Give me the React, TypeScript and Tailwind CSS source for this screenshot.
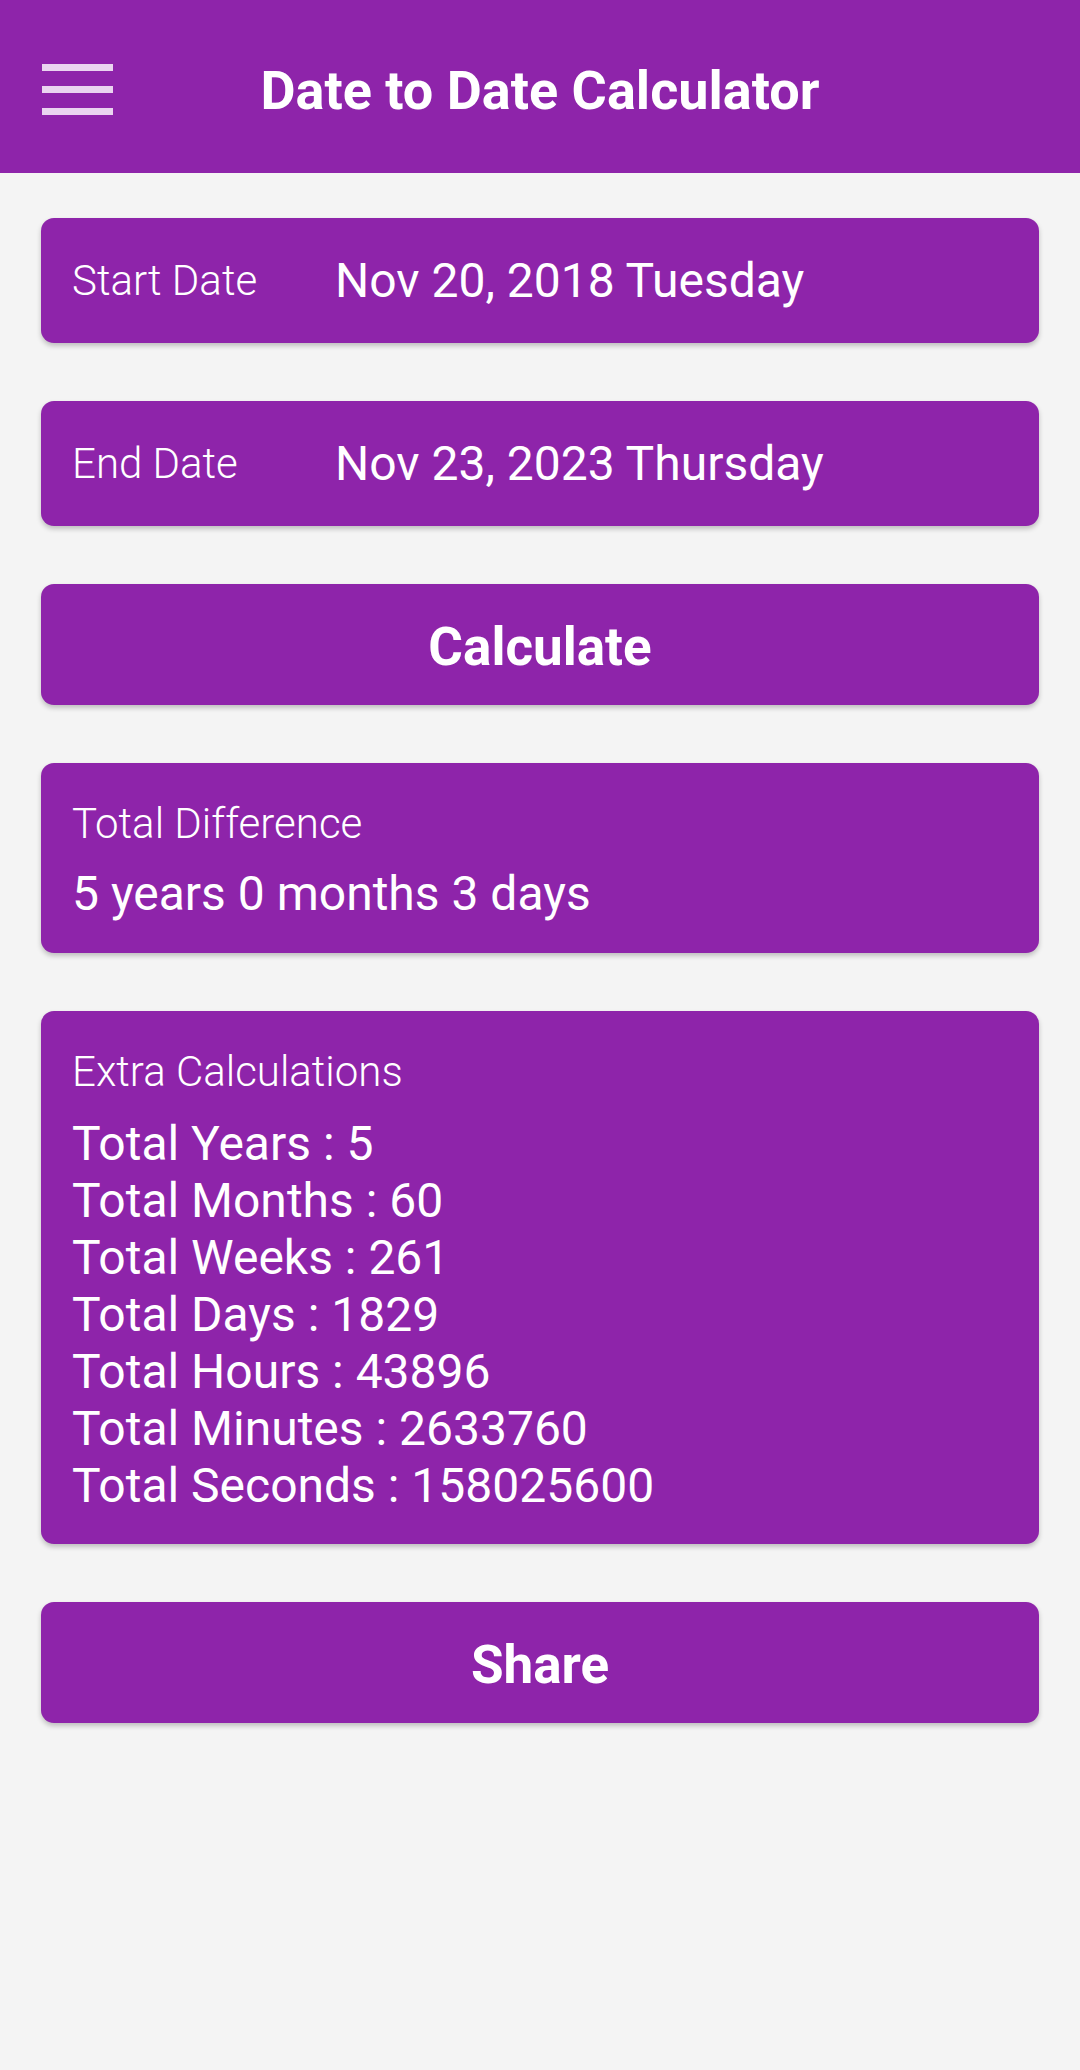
import React from 'react';

const purple = 'bg-[#8e24aa]';
const cardShadow = 'shadow-[0_3px_5px_rgba(0,0,0,0.22)]';

const extraRows = [
  ['Total Years', '5'],
  ['Total Months', '60'],
  ['Total Weeks', '261'],
  ['Total Days', '1829'],
  ['Total Hours', '43896'],
  ['Total Minutes', '2633760'],
  ['Total Seconds', '158025600'],
];

const DateRow = ({ label, value }: { label: string; value: string }) => (
  <div className={`${purple} ${cardShadow} h-[125px] rounded-[13px] flex items-center pl-[31px]`}>
    <span className="w-[263px] text-[42px] font-light leading-[49px]">{label}</span>
    <span className="text-[48px] leading-[56px]">{value}</span>
  </div>
);

const ActionButton = ({ label }: { label: string }) => (
  <button
    className={`${purple} ${cardShadow} h-[121px] w-full rounded-[13px] flex items-center justify-center pt-[6px] text-[53px] font-bold text-white`}
  >
    {label}
  </button>
);

export default function App() {
  return (
    <div className="min-h-[2070px] w-[1080px] bg-[#f4f4f4] text-white font-['Roboto',sans-serif]">
      {/* toolbar */}
      <header className={`${purple} h-[173px] relative flex items-center justify-center`}>
        <div className="absolute left-[42px] top-[64px] w-[71px] flex flex-col gap-[15px]">
          <div className="h-[7px] bg-[#ead4f0]" />
          <div className="h-[7px] bg-[#ead4f0]" />
          <div className="h-[7px] bg-[#ead4f0]" />
        </div>
        <h1 className="text-[54px] font-bold leading-[64px] mt-[8px]">Date to Date Calculator</h1>
      </header>

      <main className="px-[41px] pt-[45px] flex flex-col gap-[58px]">
        <DateRow label="Start Date" value="Nov 20, 2018 Tuesday" />
        <DateRow label="End Date" value="Nov 23, 2023 Thursday" />

        <ActionButton label="Calculate" />

        <div className={`${purple} ${cardShadow} rounded-[13px] pl-[31px] pt-[36px] pb-[31px]`}>
          <div className="text-[42px] font-light leading-[49px]">Total Difference</div>
          <div className="mt-[18px] text-[48px] leading-[56px]">5 years 0 months 3 days</div>
        </div>

        <div className={`${purple} ${cardShadow} rounded-[13px] pl-[31px] pt-[36px] pb-[30px]`}>
          <div className="text-[42px] font-light leading-[49px]">Extra Calculations</div>
          <div className="mt-[19px] flex flex-col">
            {extraRows.map(([k, v]) => (
              <div key={k} className="text-[48px] leading-[57px]">
                {k} : {v}
              </div>
            ))}
          </div>
        </div>

        <ActionButton label="Share" />
      </main>
    </div>
  );
}
